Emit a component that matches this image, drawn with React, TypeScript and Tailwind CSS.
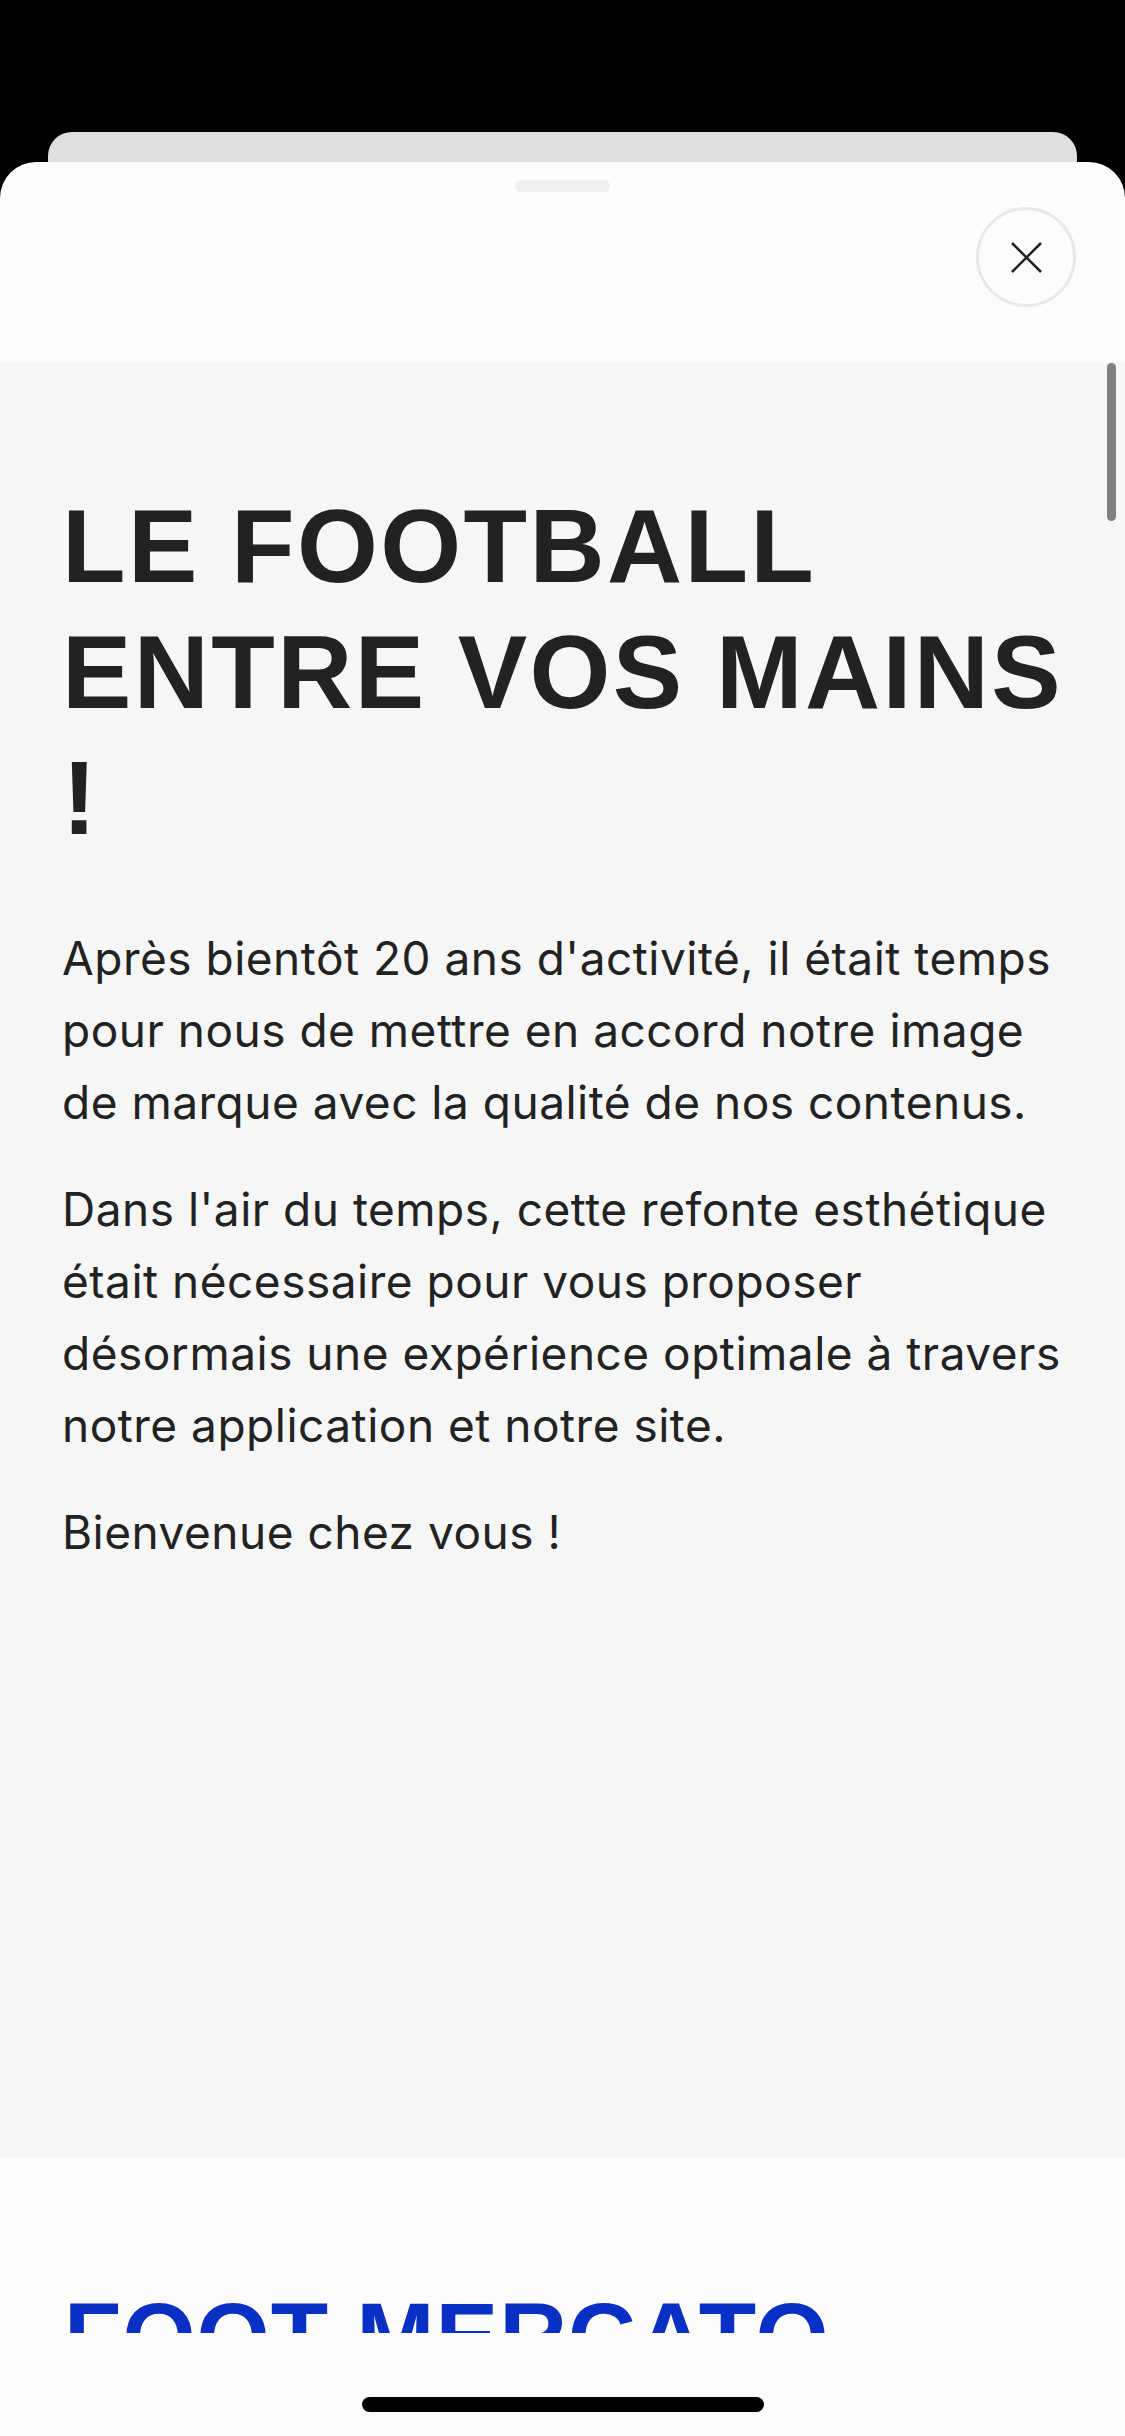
export default function App() {
  const paragraphs = [
    "Après bientôt 20 ans d'activité, il était temps pour nous de mettre en accord notre image de marque avec la qualité de nos contenus.",
    "Dans l'air du temps, cette refonte esthétique était nécessaire pour vous proposer désormais une expérience optimale à travers notre application et notre site.",
    'Bienvenue chez vous !',
  ];

  return (
    <div className="w-[1125px] h-[2436px] bg-black flex flex-col pt-[132px] overflow-hidden">
      <div className="mx-[48px] h-[30px] shrink-0 bg-[#e0dfdd] rounded-t-[24px]" />

      <div className="flex-1 flex flex-col bg-[#fcfcfa] rounded-t-[36px] overflow-hidden">
        {/* sheet header */}
        <div className="h-[200px] shrink-0 flex flex-col">
          <div className="mt-[18px] mx-auto w-[95px] h-[12px] rounded-full bg-[#efefef]" />
          <div className="mt-[15px] flex justify-end pr-[49px]">
            <button className="w-[100px] h-[100px] rounded-full border-[3px] border-[#e8e8e8] flex items-center justify-center">
              <svg width="31" height="31" viewBox="0 0 31 31" fill="none">
                <path d="M1 1L30 30M30 1L1 30" stroke="#222" strokeWidth="2.5" />
              </svg>
            </button>
          </div>
        </div>

        {/* scroll area */}
        <div className="relative h-[1971px] shrink-0 overflow-hidden">
          <div className="h-[1795px] bg-[#f6f6f6] px-[62px] pt-[121px]">
            <h1 className="font-['Liberation_Sans',Arial,sans-serif] font-bold text-[104px] leading-[126px] tracking-[2.4px] text-[#222]">
              LE FOOTBALL ENTRE VOS MAINS !
            </h1>
            <div className="mt-[61px] flex flex-col gap-[35px]">
              {paragraphs.map((p) => (
                <p key={p} className="font-['Inter',sans-serif] text-[46px] leading-[72px] tracking-[0.5px] text-[#222]">
                  {p}
                </p>
              ))}
            </div>
          </div>
          <div className="px-[64px] pt-[133px]">
            <h2 className="font-['Liberation_Sans',Arial,sans-serif] font-bold text-[94px] leading-none tracking-[1px] text-[#0a2fc4]">
              FOOT MERCATO
            </h2>
          </div>
          <div className="absolute right-[9px] top-[1px] w-[9px] h-[158px] rounded-full bg-[#808080]" />
        </div>

        {/* home indicator */}
        <div className="flex-1 flex justify-center pt-[64px]">
          <div className="w-[402px] h-[15px] rounded-full bg-black" />
        </div>
      </div>
    </div>
  );
}
